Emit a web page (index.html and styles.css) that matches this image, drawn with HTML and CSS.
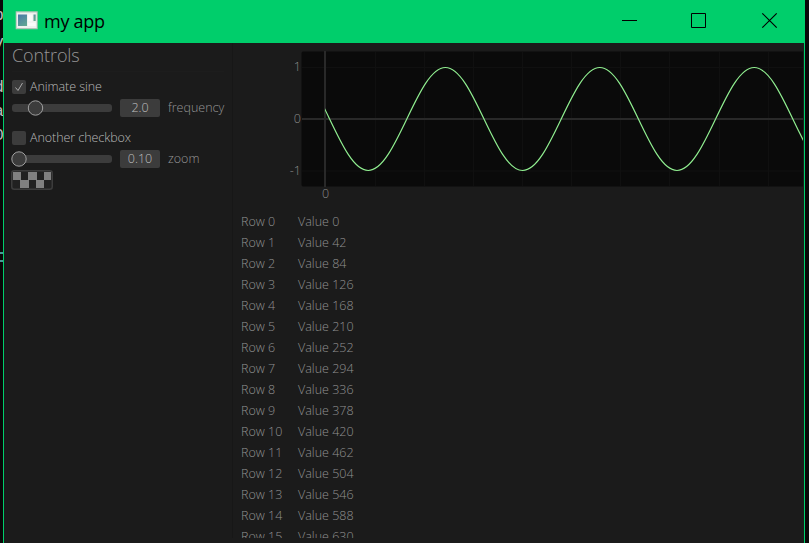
FILE: index.html
```
<!DOCTYPE html>
<html lang="en">
<head>
<meta charset="utf-8">
<title>my app</title>
<link rel="stylesheet" href="styles.css">
</head>
<body>
<div class="behind" aria-hidden="true"><span class="b1">p</span><span class="b2">v</span><span class="b3">d</span><span class="b4">a</span><span class="b5">0</span><i></i></div>
<div class="window">
  <header class="titlebar">
    <svg class="appicon" width="23" height="19" viewBox="0 0 23 19">
      <defs><linearGradient id="g" x1="0" y1="0" x2="1" y2="1"><stop offset="0" stop-color="#4778a8"/><stop offset="1" stop-color="#6cb98a"/></linearGradient></defs>
      <path fill="#b4c2bb" d="M.7.300h22v18h-22z"/><path fill="#eef1ef" d="M1.700 1.500h20v15.500h-20z"/>
      <path fill="url(#g)" d="M3 3.500h9v11.500H3zM18.500 3.500h2.200v6.500h-2.200z"/>
      <path fill="#fafafa" d="M13 3.500h4.500v7H13zM13 11.500h7.700V15H13z"/>
    </svg>
    <h1>my app</h1>
    <svg class="winbtns" width="158" height="20" viewBox="620 10 158 20" fill="none" stroke="#000" stroke-width="1">
      <path d="M622 20.500h15M691.500 13.500h14v14h-14z"/><path stroke-width="1.200" d="M762.300 13.300l14.400 14.400M776.700 13.300l-14.400 14.400"/>
    </svg>
  </header>
  <div class="content">
    <aside class="controls">
      <h2><span>Controls</span></h2>
      <hr>
      <label class="check"><span class="box"><svg width="14" height="14" viewBox="0 0 14 14"><path d="M3.500 7.500l2.500 3 4.500-7.500" fill="none" stroke="#aaa"/></svg></span><span class="t-animate">Animate sine</span></label>
      <div class="slider"><svg width="108" height="18" viewBox="0 0 108 18"><rect x="4" y="5" width="100" height="8" rx="3" fill="#3c3c3c"/><circle cx="27.500" cy="9" r="7.200" fill="#3c3c3c" stroke="#a0a0a0"/></svg><span class="num">2.0</span><span class="name t-freq">frequency</span></div>
      <label class="check second"><span class="box"></span><span class="t-another">Another checkbox</span></label>
      <div class="slider"><svg width="108" height="18" viewBox="0 0 108 18"><rect x="4" y="5" width="100" height="8" rx="3" fill="#3c3c3c"/><circle cx="11" cy="9" r="7.200" fill="#3c3c3c" stroke="#a0a0a0"/></svg><span class="num n2">0.10</span><span class="name t-zoom">zoom</span></div>
      <svg class="swatch" width="42" height="20" viewBox="0 0 42 20">
        <rect x="1" y="1" width="40" height="18" rx="2" fill="#212121"/>
        <path fill="#808080" d="M2 2h8v8H2zM17 2h9v8h-9zM33 2h7v8h-7zM9 10h9v8H9zM25 10h8v8h-8z"/>
        <rect x=".75" y=".75" width="40.500" height="18.500" rx="2.500" fill="none" stroke="#3c3c3c" stroke-width="1.500"/>
      </svg>
    </aside>
    <main>
      <div class="plot">
        <div class="yaxis"><span>1</span><span>0</span><span>-1</span></div>
        <div class="graph">
          <svg width="502" height="136" viewBox="301 51 502 136" fill="none">
            <path fill="#0a0a0a" d="M303 51.500h500v135H303q-1.500 0-1.500-2v-131q0-2 1.500-2z"/>
            <path stroke="#101010" d="M375.500 52v134M424.500 52v134M473.500 52v134M522.500 52v134M571.500 52v134M620.500 52v134M669.500 52v134M719.500 52v134M768.500 52v134M302 67.500h501M302 171h501"/>
            <path stroke="#292929" stroke-width="2" d="M325 51v136M302 119h501"/>
            <clipPath id="c"><path d="M325 51h478v136H325z"/></clipPath>
            <path clip-path="url(#c)" stroke="#90ee90" stroke-width="1.200" d="M291 67.500C319.100 67.500 340.100 170.500 368.200 170.500S417.300 67.500 445.400 67.500 494.500 170.500 522.600 170.500 571.700 67.500 599.800 67.500 648.900 170.500 677 170.500 726.100 67.500 754.200 67.500 803.300 170.500 831.400 170.500"/>
          </svg>
          <span class="xlabel">0</span>
        </div>
      </div>
      <table>
        <tr><td>Row 0</td><td>Value 0</td></tr>
        <tr><td>Row 1</td><td>Value 42</td></tr>
        <tr><td>Row 2</td><td>Value 84</td></tr>
        <tr><td>Row 3</td><td>Value 126</td></tr>
        <tr><td>Row 4</td><td>Value 168</td></tr>
        <tr><td>Row 5</td><td>Value 210</td></tr>
        <tr><td>Row 6</td><td>Value 252</td></tr>
        <tr><td>Row 7</td><td>Value 294</td></tr>
        <tr><td>Row 8</td><td>Value 336</td></tr>
        <tr><td>Row 9</td><td>Value 378</td></tr>
        <tr><td>Row 10</td><td>Value 420</td></tr>
        <tr><td>Row 11</td><td>Value 462</td></tr>
        <tr><td>Row 12</td><td>Value 504</td></tr>
        <tr><td>Row 13</td><td>Value 546</td></tr>
        <tr><td>Row 14</td><td>Value 588</td></tr>
        <tr><td>Row 15</td><td>Value 630</td></tr>
      </table>
    </main>
  </div>
</div>
</body>
</html>
```
FILE: styles.css
```
* { box-sizing: border-box; }
body {
  margin: 0;
  width: 809px;
  height: 543px;
  overflow: hidden;
  display: flex;
  background: #080808;
  font: 300 12.5px/18px "Open Sans", "Noto Sans", sans-serif;
  color: #969696;
}
h1, h2, hr { margin: 0; }
svg { display: block; flex: none; }
.behind {
  position: relative;
  width: 3px;
  height: 543px;
  flex: none;
  overflow: hidden;
  font: 17px/20px "Liberation Mono", monospace;
  color: #bbb;
}
.behind span { position: absolute; right: -1px; }
.b1 { top: 6px; }
.b2 { top: 33px; }
.b3 { top: 78px; }
.b4 { top: 102px; }
.b5 { top: 126px; }
.behind i {
  position: absolute;
  top: 252px;
  width: 3px;
  height: 10px;
  border: solid #489898;
  border-width: 2px 0;
}
.window {
  width: 802px;
  height: 543px;
  flex: none;
  border: solid #00ce6b;
  border-width: 0 1px;
  background: #1b1b1b;
}
.titlebar {
  height: 43px;
  display: flex;
  background: #00ce6b;
  color: #000;
}
.appicon { margin: 11px 0 0 11px; }
.titlebar h1 {
  margin: 9px 0 0 6px;
  font: 400 18px/25px "Open Sans", sans-serif;
  letter-spacing: -.25px;
}
.winbtns { margin: 10px 26px 0 auto; }
.content { display: flex; height: 495px; overflow: hidden; }
.controls {
  width: 229px;
  flex: none;
  padding-left: 8px;
  border-right: 1px solid #171717;
}
.controls h2 {
  font-weight: 300;
  font-size: 18px;
  line-height: 24px;
  letter-spacing: -.1px;
}
.controls hr { border: 0; height: 1px; margin: 4px 8px 6px 0; background: #1d1d1d; }
.check {
  display: flex;
  align-items: center;
  height: 18px;
  gap: 4px;
  color: #b8b8b8;
}
.box { width: 14px; height: 14px; border-radius: 2px; background: #3c3c3c; }
.slider { display: flex; height: 18px; margin: 3px 0 0 -4px; }
.num {
  width: 40px;
  margin-left: 4px;
  border-radius: 2px;
  background: #3c3c3c;
  color: #bebebe;
  text-align: center;
}
.name { margin-left: 8px; }
.t-animate, .t-another { letter-spacing: -.06px; }
.second { margin-top: 12px; }
.swatch { margin: 2px 0 0 -1px; }
main { flex: 1; padding-left: 8px; min-width: 0; }
.plot { display: flex; height: 168px; padding-top: 8px; }
.yaxis {
  width: 60px;
  padding: 7px 0 0;
  display: flex;
  flex-direction: column;
  gap: 34px;
  text-align: right;
  color: #8a8a8a;
}
.graph { width: 502px; }
.xlabel {
  display: block;
  width: 49px;
  line-height: 14px;
  text-align: center;
  color: #8a8a8a;
}
table { border-collapse: collapse; }
td { padding: 0; height: 21px; line-height: 21px; color: #919191; }
td:first-child { width: 57px; }
```
